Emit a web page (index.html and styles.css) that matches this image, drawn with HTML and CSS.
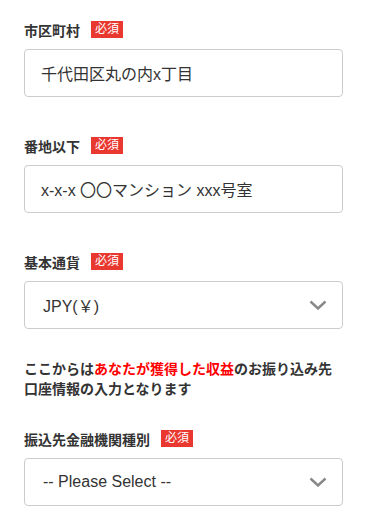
FILE: index.html
```html
<!DOCTYPE html>
<html lang="ja">
<head>
<meta charset="utf-8">
<link rel="stylesheet" href="styles.css">
</head>
<body>
<div class="form">
  <div class="field">
    <div class="label-row"><span class="label">市区町村</span><span class="badge">必須</span></div>
    <div class="box">千代田区丸の内x丁目</div>
  </div>
  <div class="field">
    <div class="label-row"><span class="label">番地以下</span><span class="badge">必須</span></div>
    <div class="box">x-x-x 〇〇マンション xxx号室</div>
  </div>
  <div class="field field--tight">
    <div class="label-row"><span class="label">基本通貨</span><span class="badge">必須</span></div>
    <div class="box select"><span class="value">JPY(￥)</span>
      <svg class="chevron" width="18" height="10" viewBox="0 0 18 10"><polyline points="1.5,1.5 9,8.5 16.5,1.5" fill="none" stroke="#888" stroke-width="2.4"/></svg>
    </div>
  </div>
  <p class="note">ここからは<span class="red">あなたが獲得した収益</span>のお振り込み先口座情報の入力となります</p>
  <div class="field">
    <div class="label-row"><span class="label">振込先金融機関種別</span><span class="badge">必須</span></div>
    <div class="box select"><span class="value">-- Please Select --</span>
      <svg class="chevron" width="18" height="10" viewBox="0 0 18 10"><polyline points="1.5,1.5 9,8.5 16.5,1.5" fill="none" stroke="#888" stroke-width="2.4"/></svg>
    </div>
  </div>
</div>
</body>
</html>
```
FILE: styles.css
```css
html, body {
  margin: 0;
  padding: 0;
  background: #fff;
}
body {
  font-family: "Liberation Sans", "Noto Sans CJK JP", sans-serif;
  color: #333;
}
.form {
  padding: 21px 28px 0 24px;
  display: flex;
  flex-direction: column;
}
.field {
  margin-bottom: 40px;
}
.field--tight {
  margin-bottom: 30px;
}
.label-row {
  display: flex;
  align-items: center;
  height: 17px;
  margin-bottom: 11px;
}
.label {
  font-size: 14px;
  font-weight: bold;
  color: #333;
}
.badge {
  margin-left: 11px;
  background: #e8382f;
  color: #fff;
  font-size: 12px;
  height: 17px;
  line-height: 17px;
  padding: 0 4px;
}
.box {
  height: 48px;
  box-sizing: border-box;
  border: 1px solid #ccc;
  border-radius: 4px;
  padding: 0 15px 0 16px;
  display: flex;
  align-items: center;
  font-size: 16px;
  color: #333;
}
.select {
  justify-content: space-between;
}
.select .value {
  padding-left: 2px;
}
.note {
  margin: 0 0 31px;
  font-size: 14px;
  font-weight: bold;
  line-height: 20px;
  color: #333;
}
.red {
  color: #f00;
}
```
